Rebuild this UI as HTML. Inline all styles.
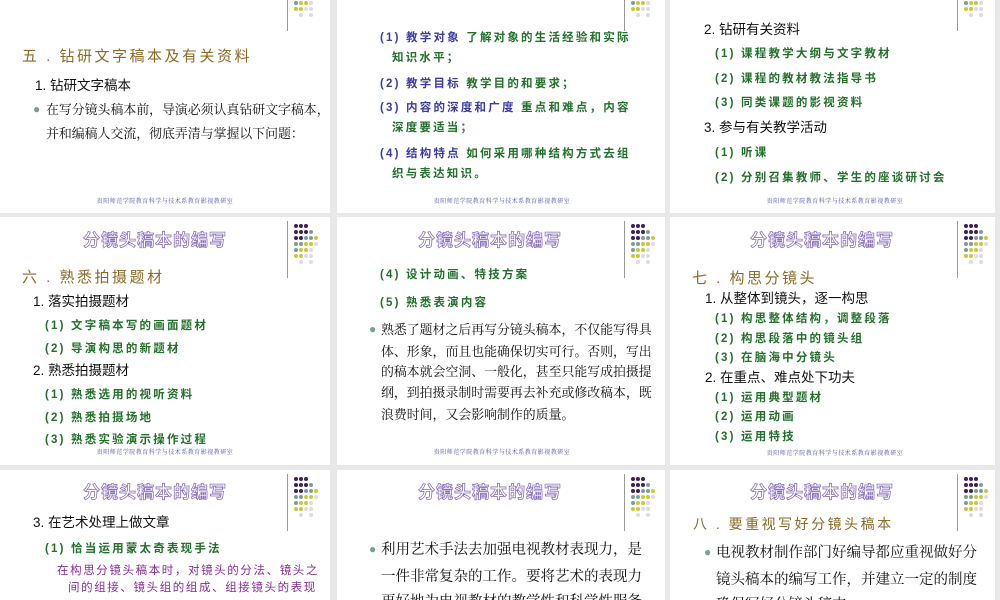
<!DOCTYPE html>
<html><head><meta charset="utf-8">
<style>
*{margin:0;padding:0;box-sizing:border-box}
html{width:1000px;height:600px;overflow:hidden}
body{width:1000px;height:600px;background:#e8e8e8;position:relative;overflow:hidden;font-family:"Liberation Serif","Noto Serif CJK SC",serif}
.s{position:absolute;background:#fff;overflow:hidden}
.t{position:absolute;white-space:nowrap;line-height:20px}
.blk{font-size:13.5px;color:#111;font-family:"Liberation Sans","Noto Sans CJK SC",sans-serif}
.bd{font-size:12.9px;color:#111}
.g{font-size:11.5px;color:#22702a;letter-spacing:2.2px;font-family:"Liberation Sans","Noto Sans CJK SC",sans-serif;font-weight:bold}
.bl{color:#3b3ba6}
.h{font-size:15px;color:#8c6a28;letter-spacing:2.5px;font-family:"Liberation Sans","Noto Sans CJK SC",sans-serif}
.ti{position:absolute;width:200px;text-align:center;font-size:17px;font-weight:bold;color:#fff;-webkit-text-stroke:0.8px #8a70bc;letter-spacing:1px;font-family:"Liberation Sans","Noto Sans CJK SC",sans-serif;line-height:22px}
.f{position:absolute;width:330px;text-align:center;font-size:6px;color:#5050b0;line-height:8px;letter-spacing:.5px}
.dots{position:absolute;left:285px;top:0;width:40px;height:64px}
.p{color:#8a2a9a;font-size:11.5px;letter-spacing:1.6px;font-family:"Liberation Sans","Noto Sans CJK SC",sans-serif}
</style></head><body>

<!-- Row 1 -->
<div class="s" style="left:0;top:-30px;width:330px;height:243px">
<svg class="dots" viewBox="0 0 40 64"><line x1="2.5" y1="4" x2="2.5" y2="61" stroke="#999" stroke-width="1"/>
<circle cx="11" cy="33" r="2" fill="#7a9e9a"/><circle cx="16" cy="33" r="2" fill="#c8c83a"/><circle cx="21" cy="33" r="2" fill="#c8c83a"/><circle cx="26" cy="33" r="2" fill="#dcdce6"/>
<circle cx="11" cy="39" r="2" fill="#c8c83a"/><circle cx="16" cy="39" r="2" fill="#c8c83a"/><circle cx="21" cy="39" r="2" fill="#dcdce6"/><circle cx="26" cy="39" r="2" fill="#dcdce6"/>
<circle cx="16" cy="45" r="2" fill="#dcdce6"/><circle cx="26" cy="45" r="2" fill="#dcdce6"/></svg>
<div class="t h" style="left:22px;top:77px">五 . 钻研文字稿本及有关资料</div>
<div class="t blk" style="left:35px;top:106px">1. 钻研文字稿本</div>
<div class="t" style="left:33px;top:129px;color:#7a9e9a;font-size:12px">●</div>
<div class="t bd" style="left:46px;top:130px">在写分镜头稿本前，导演必须认真钻研文字稿本，</div>
<div class="t bd" style="left:46px;top:154px">并和编稿人交流，彻底弄清与掌握以下问题：</div>
<div class="f" style="left:0;top:228px">贵阳师范学院教育科学与技术系教育影视教研室</div>
</div>

<div class="s" style="left:337px;top:-30px;width:328px;height:243px">
<svg class="dots" viewBox="0 0 40 64"><line x1="2.5" y1="4" x2="2.5" y2="61" stroke="#999"/>
<circle cx="11" cy="33" r="2" fill="#7a9e9a"/><circle cx="16" cy="33" r="2" fill="#c8c83a"/><circle cx="21" cy="33" r="2" fill="#c8c83a"/><circle cx="26" cy="33" r="2" fill="#dcdce6"/>
<circle cx="11" cy="39" r="2" fill="#c8c83a"/><circle cx="16" cy="39" r="2" fill="#c8c83a"/><circle cx="21" cy="39" r="2" fill="#dcdce6"/><circle cx="26" cy="39" r="2" fill="#dcdce6"/>
<circle cx="16" cy="45" r="2" fill="#dcdce6"/><circle cx="26" cy="45" r="2" fill="#dcdce6"/></svg>
<div class="t g" style="left:43px;top:58px"><span class="bl">(1) 教学对象</span> 了解对象的生活经验和实际</div>
<div class="t g" style="left:55px;top:78px">知识水平；</div>
<div class="t g" style="left:43px;top:104px"><span class="bl">(2) 教学目标</span> 教学目的和要求；</div>
<div class="t g" style="left:43px;top:128px"><span class="bl">(3) 内容的深度和广度</span> 重点和难点，内容</div>
<div class="t g" style="left:55px;top:148px">深度要适当；</div>
<div class="t g" style="left:43px;top:174px"><span class="bl">(4) 结构特点</span> 如何采用哪种结构方式去组</div>
<div class="t g" style="left:55px;top:194px">织与表达知识。</div>
<div class="f" style="left:0;top:228px">贵阳师范学院教育科学与技术系教育影视教研室</div>
</div>

<div class="s" style="left:670px;top:-30px;width:325px;height:243px">
<svg class="dots" viewBox="0 0 40 64"><line x1="2.5" y1="4" x2="2.5" y2="61" stroke="#999"/>
<circle cx="11" cy="33" r="2" fill="#7a9e9a"/><circle cx="16" cy="33" r="2" fill="#c8c83a"/><circle cx="21" cy="33" r="2" fill="#c8c83a"/><circle cx="26" cy="33" r="2" fill="#dcdce6"/>
<circle cx="11" cy="39" r="2" fill="#c8c83a"/><circle cx="16" cy="39" r="2" fill="#c8c83a"/><circle cx="21" cy="39" r="2" fill="#dcdce6"/><circle cx="26" cy="39" r="2" fill="#dcdce6"/>
<circle cx="16" cy="45" r="2" fill="#dcdce6"/><circle cx="26" cy="45" r="2" fill="#dcdce6"/></svg>
<div class="t blk" style="left:34px;top:50px">2. 钻研有关资料</div>
<div class="t g" style="left:45px;top:74px">(1) 课程教学大纲与文字教材</div>
<div class="t g" style="left:45px;top:99px">(2) 课程的教材教法指导书</div>
<div class="t g" style="left:45px;top:123px">(3) 同类课题的影视资料</div>
<div class="t blk" style="left:34px;top:148px">3. 参与有关教学活动</div>
<div class="t g" style="left:45px;top:173px">(1) 听课</div>
<div class="t g" style="left:45px;top:198px">(2) 分别召集教师、学生的座谈研讨会</div>
<div class="f" style="left:0;top:228px">贵阳师范学院教育科学与技术系教育影视教研室</div>
</div>

<!-- Row 2 -->
<div class="s" style="left:0;top:217px;width:330px;height:248px">
<svg class="dots" viewBox="0 0 40 64"><line x1="2.5" y1="4" x2="2.5" y2="61" stroke="#999"/>
<circle cx="11" cy="9" r="2" fill="#3d1f5c"/><circle cx="16" cy="9" r="2" fill="#3d1f5c"/><circle cx="21" cy="9" r="2" fill="#3d1f5c"/>
<circle cx="11" cy="15" r="2" fill="#3d1f5c"/><circle cx="16" cy="15" r="2" fill="#3d1f5c"/><circle cx="21" cy="15" r="2" fill="#3d1f5c"/><circle cx="26" cy="15" r="2" fill="#7a9e9a"/>
<circle cx="11" cy="21" r="2" fill="#3d1f5c"/><circle cx="16" cy="21" r="2" fill="#3d1f5c"/><circle cx="21" cy="21" r="2" fill="#7a9e9a"/><circle cx="26" cy="21" r="2" fill="#7a9e9a"/><circle cx="31" cy="21" r="2" fill="#c8c83a"/>
<circle cx="11" cy="27" r="2" fill="#7a9e9a"/><circle cx="16" cy="27" r="2" fill="#7a9e9a"/><circle cx="21" cy="27" r="2" fill="#c8c83a"/><circle cx="26" cy="27" r="2" fill="#c8c83a"/><circle cx="31" cy="27" r="2" fill="#dcdce6"/>
<circle cx="11" cy="33" r="2" fill="#7a9e9a"/><circle cx="16" cy="33" r="2" fill="#c8c83a"/><circle cx="21" cy="33" r="2" fill="#c8c83a"/><circle cx="26" cy="33" r="2" fill="#dcdce6"/>
<circle cx="11" cy="39" r="2" fill="#c8c83a"/><circle cx="16" cy="39" r="2" fill="#c8c83a"/><circle cx="21" cy="39" r="2" fill="#dcdce6"/><circle cx="26" cy="39" r="2" fill="#dcdce6"/>
<circle cx="16" cy="45" r="2" fill="#dcdce6"/><circle cx="26" cy="45" r="2" fill="#dcdce6"/></svg>
<div class="ti" style="left:55px;top:13px">分镜头稿本的编写</div>
<div class="t h" style="left:22px;top:51px">六 . 熟悉拍摄题材</div>
<div class="t blk" style="left:33px;top:75px">1. 落实拍摄题材</div>
<div class="t g" style="left:45px;top:99px">(1) 文字稿本写的画面题材</div>
<div class="t g" style="left:45px;top:122px">(2) 导演构思的新题材</div>
<div class="t blk" style="left:33px;top:144px">2. 熟悉拍摄题材</div>
<div class="t g" style="left:45px;top:168px">(1) 熟悉选用的视听资料</div>
<div class="t g" style="left:45px;top:191px">(2) 熟悉拍摄场地</div>
<div class="t g" style="left:45px;top:213px">(3) 熟悉实验演示操作过程</div>
<div class="f" style="left:0;top:232px">贵阳师范学院教育科学与技术系教育影视教研室</div>
</div>

<div class="s" style="left:337px;top:217px;width:328px;height:248px">
<svg class="dots" viewBox="0 0 40 64"><line x1="2.5" y1="4" x2="2.5" y2="61" stroke="#999"/>
<circle cx="11" cy="9" r="2" fill="#3d1f5c"/><circle cx="16" cy="9" r="2" fill="#3d1f5c"/><circle cx="21" cy="9" r="2" fill="#3d1f5c"/>
<circle cx="11" cy="15" r="2" fill="#3d1f5c"/><circle cx="16" cy="15" r="2" fill="#3d1f5c"/><circle cx="21" cy="15" r="2" fill="#3d1f5c"/><circle cx="26" cy="15" r="2" fill="#7a9e9a"/>
<circle cx="11" cy="21" r="2" fill="#3d1f5c"/><circle cx="16" cy="21" r="2" fill="#3d1f5c"/><circle cx="21" cy="21" r="2" fill="#7a9e9a"/><circle cx="26" cy="21" r="2" fill="#7a9e9a"/><circle cx="31" cy="21" r="2" fill="#c8c83a"/>
<circle cx="11" cy="27" r="2" fill="#7a9e9a"/><circle cx="16" cy="27" r="2" fill="#7a9e9a"/><circle cx="21" cy="27" r="2" fill="#c8c83a"/><circle cx="26" cy="27" r="2" fill="#c8c83a"/><circle cx="31" cy="27" r="2" fill="#dcdce6"/>
<circle cx="11" cy="33" r="2" fill="#7a9e9a"/><circle cx="16" cy="33" r="2" fill="#c8c83a"/><circle cx="21" cy="33" r="2" fill="#c8c83a"/><circle cx="26" cy="33" r="2" fill="#dcdce6"/>
<circle cx="11" cy="39" r="2" fill="#c8c83a"/><circle cx="16" cy="39" r="2" fill="#c8c83a"/><circle cx="21" cy="39" r="2" fill="#dcdce6"/><circle cx="26" cy="39" r="2" fill="#dcdce6"/>
<circle cx="16" cy="45" r="2" fill="#dcdce6"/><circle cx="26" cy="45" r="2" fill="#dcdce6"/></svg>
<div class="ti" style="left:53px;top:13px">分镜头稿本的编写</div>
<div class="t g" style="left:43px;top:48px">(4) 设计动画、特技方案</div>
<div class="t g" style="left:43px;top:76px">(5) 熟悉表演内容</div>
<div class="t" style="left:32px;top:102px;color:#7a9e9a;font-size:12px">●</div>
<div class="t bd" style="left:44px;top:103px">熟悉了题材之后再写分镜头稿本，不仅能写得具</div>
<div class="t bd" style="left:44px;top:125px">体、形象，而且也能确保切实可行。否则，写出</div>
<div class="t bd" style="left:44px;top:145px">的稿本就会空洞、一般化，甚至只能写成拍摄提</div>
<div class="t bd" style="left:44px;top:166px">纲，到拍摄录制时需要再去补充或修改稿本，既</div>
<div class="t bd" style="left:44px;top:188px">浪费时间，又会影响制作的质量。</div>
<div class="f" style="left:0;top:232px">贵阳师范学院教育科学与技术系教育影视教研室</div>
</div>

<div class="s" style="left:670px;top:217px;width:325px;height:248px">
<svg class="dots" viewBox="0 0 40 64"><line x1="2.5" y1="4" x2="2.5" y2="61" stroke="#999"/>
<circle cx="11" cy="9" r="2" fill="#3d1f5c"/><circle cx="16" cy="9" r="2" fill="#3d1f5c"/><circle cx="21" cy="9" r="2" fill="#3d1f5c"/>
<circle cx="11" cy="15" r="2" fill="#3d1f5c"/><circle cx="16" cy="15" r="2" fill="#3d1f5c"/><circle cx="21" cy="15" r="2" fill="#3d1f5c"/><circle cx="26" cy="15" r="2" fill="#7a9e9a"/>
<circle cx="11" cy="21" r="2" fill="#3d1f5c"/><circle cx="16" cy="21" r="2" fill="#3d1f5c"/><circle cx="21" cy="21" r="2" fill="#7a9e9a"/><circle cx="26" cy="21" r="2" fill="#7a9e9a"/><circle cx="31" cy="21" r="2" fill="#c8c83a"/>
<circle cx="11" cy="27" r="2" fill="#7a9e9a"/><circle cx="16" cy="27" r="2" fill="#7a9e9a"/><circle cx="21" cy="27" r="2" fill="#c8c83a"/><circle cx="26" cy="27" r="2" fill="#c8c83a"/><circle cx="31" cy="27" r="2" fill="#dcdce6"/>
<circle cx="11" cy="33" r="2" fill="#7a9e9a"/><circle cx="16" cy="33" r="2" fill="#c8c83a"/><circle cx="21" cy="33" r="2" fill="#c8c83a"/><circle cx="26" cy="33" r="2" fill="#dcdce6"/>
<circle cx="11" cy="39" r="2" fill="#c8c83a"/><circle cx="16" cy="39" r="2" fill="#c8c83a"/><circle cx="21" cy="39" r="2" fill="#dcdce6"/><circle cx="26" cy="39" r="2" fill="#dcdce6"/>
<circle cx="16" cy="45" r="2" fill="#dcdce6"/><circle cx="26" cy="45" r="2" fill="#dcdce6"/></svg>
<div class="ti" style="left:52px;top:13px">分镜头稿本的编写</div>
<div class="t h" style="left:22px;top:52px">七 . 构思分镜头</div>
<div class="t blk" style="left:35px;top:72px">1. 从整体到镜头，逐一构思</div>
<div class="t g" style="left:45px;top:92px">(1) 构思整体结构，调整段落</div>
<div class="t g" style="left:45px;top:112px">(2) 构思段落中的镜头组</div>
<div class="t g" style="left:45px;top:131px">(3) 在脑海中分镜头</div>
<div class="t blk" style="left:35px;top:151px">2. 在重点、难点处下功夫</div>
<div class="t g" style="left:45px;top:171px">(1) 运用典型题材</div>
<div class="t g" style="left:45px;top:190px">(2) 运用动画</div>
<div class="t g" style="left:45px;top:210px">(3) 运用特技</div>
<div class="f" style="left:0;top:233px">贵阳师范学院教育科学与技术系教育影视教研室</div>
</div>

<!-- Row 3 -->
<div class="s" style="left:0;top:470px;width:330px;height:130px">
<svg class="dots" viewBox="0 0 40 64"><line x1="2.5" y1="4" x2="2.5" y2="61" stroke="#999"/>
<circle cx="11" cy="9" r="2" fill="#3d1f5c"/><circle cx="16" cy="9" r="2" fill="#3d1f5c"/><circle cx="21" cy="9" r="2" fill="#3d1f5c"/>
<circle cx="11" cy="15" r="2" fill="#3d1f5c"/><circle cx="16" cy="15" r="2" fill="#3d1f5c"/><circle cx="21" cy="15" r="2" fill="#3d1f5c"/><circle cx="26" cy="15" r="2" fill="#7a9e9a"/>
<circle cx="11" cy="21" r="2" fill="#3d1f5c"/><circle cx="16" cy="21" r="2" fill="#3d1f5c"/><circle cx="21" cy="21" r="2" fill="#7a9e9a"/><circle cx="26" cy="21" r="2" fill="#7a9e9a"/><circle cx="31" cy="21" r="2" fill="#c8c83a"/>
<circle cx="11" cy="27" r="2" fill="#7a9e9a"/><circle cx="16" cy="27" r="2" fill="#7a9e9a"/><circle cx="21" cy="27" r="2" fill="#c8c83a"/><circle cx="26" cy="27" r="2" fill="#c8c83a"/><circle cx="31" cy="27" r="2" fill="#dcdce6"/>
<circle cx="11" cy="33" r="2" fill="#7a9e9a"/><circle cx="16" cy="33" r="2" fill="#c8c83a"/><circle cx="21" cy="33" r="2" fill="#c8c83a"/><circle cx="26" cy="33" r="2" fill="#dcdce6"/>
<circle cx="11" cy="39" r="2" fill="#c8c83a"/><circle cx="16" cy="39" r="2" fill="#c8c83a"/><circle cx="21" cy="39" r="2" fill="#dcdce6"/><circle cx="26" cy="39" r="2" fill="#dcdce6"/>
<circle cx="16" cy="45" r="2" fill="#dcdce6"/><circle cx="26" cy="45" r="2" fill="#dcdce6"/></svg>
<div class="ti" style="left:55px;top:12px">分镜头稿本的编写</div>
<div class="t blk" style="left:33px;top:43px">3. 在艺术处理上做文章</div>
<div class="t g" style="left:45px;top:69px">(1) 恰当运用蒙太奇表现手法</div>
<div class="t p" style="left:57px;top:91px">在构思分镜头稿本时，对镜头的分法、镜头之</div>
<div class="t p" style="left:68px;top:108px">间的组接、镜头组的组成、组接镜头的表现</div>
</div>

<div class="s" style="left:337px;top:470px;width:328px;height:130px">
<svg class="dots" viewBox="0 0 40 64"><line x1="2.5" y1="4" x2="2.5" y2="61" stroke="#999"/>
<circle cx="11" cy="9" r="2" fill="#3d1f5c"/><circle cx="16" cy="9" r="2" fill="#3d1f5c"/><circle cx="21" cy="9" r="2" fill="#3d1f5c"/>
<circle cx="11" cy="15" r="2" fill="#3d1f5c"/><circle cx="16" cy="15" r="2" fill="#3d1f5c"/><circle cx="21" cy="15" r="2" fill="#3d1f5c"/><circle cx="26" cy="15" r="2" fill="#7a9e9a"/>
<circle cx="11" cy="21" r="2" fill="#3d1f5c"/><circle cx="16" cy="21" r="2" fill="#3d1f5c"/><circle cx="21" cy="21" r="2" fill="#7a9e9a"/><circle cx="26" cy="21" r="2" fill="#7a9e9a"/><circle cx="31" cy="21" r="2" fill="#c8c83a"/>
<circle cx="11" cy="27" r="2" fill="#7a9e9a"/><circle cx="16" cy="27" r="2" fill="#7a9e9a"/><circle cx="21" cy="27" r="2" fill="#c8c83a"/><circle cx="26" cy="27" r="2" fill="#c8c83a"/><circle cx="31" cy="27" r="2" fill="#dcdce6"/>
<circle cx="11" cy="33" r="2" fill="#7a9e9a"/><circle cx="16" cy="33" r="2" fill="#c8c83a"/><circle cx="21" cy="33" r="2" fill="#c8c83a"/><circle cx="26" cy="33" r="2" fill="#dcdce6"/>
<circle cx="11" cy="39" r="2" fill="#c8c83a"/><circle cx="16" cy="39" r="2" fill="#c8c83a"/><circle cx="21" cy="39" r="2" fill="#dcdce6"/><circle cx="26" cy="39" r="2" fill="#dcdce6"/>
<circle cx="16" cy="45" r="2" fill="#dcdce6"/><circle cx="26" cy="45" r="2" fill="#dcdce6"/></svg>
<div class="ti" style="left:53px;top:12px">分镜头稿本的编写</div>
<div class="t" style="left:32px;top:69px;color:#7a9e9a;font-size:12px">●</div>
<div class="t" style="left:44px;top:70px;font-size:14.5px;color:#111">利用艺术手法去加强电视教材表现力，是</div>
<div class="t" style="left:44px;top:97px;font-size:14.5px;color:#111">一件非常复杂的工作。要将艺术的表现力</div>
<div class="t" style="left:44px;top:122px;font-size:14.5px;color:#111">更好地为电视教材的教学性和科学性服务</div>
</div>

<div class="s" style="left:670px;top:470px;width:325px;height:130px">
<svg class="dots" viewBox="0 0 40 64"><line x1="2.5" y1="4" x2="2.5" y2="61" stroke="#999"/>
<circle cx="11" cy="9" r="2" fill="#3d1f5c"/><circle cx="16" cy="9" r="2" fill="#3d1f5c"/><circle cx="21" cy="9" r="2" fill="#3d1f5c"/>
<circle cx="11" cy="15" r="2" fill="#3d1f5c"/><circle cx="16" cy="15" r="2" fill="#3d1f5c"/><circle cx="21" cy="15" r="2" fill="#3d1f5c"/><circle cx="26" cy="15" r="2" fill="#7a9e9a"/>
<circle cx="11" cy="21" r="2" fill="#3d1f5c"/><circle cx="16" cy="21" r="2" fill="#3d1f5c"/><circle cx="21" cy="21" r="2" fill="#7a9e9a"/><circle cx="26" cy="21" r="2" fill="#7a9e9a"/><circle cx="31" cy="21" r="2" fill="#c8c83a"/>
<circle cx="11" cy="27" r="2" fill="#7a9e9a"/><circle cx="16" cy="27" r="2" fill="#7a9e9a"/><circle cx="21" cy="27" r="2" fill="#c8c83a"/><circle cx="26" cy="27" r="2" fill="#c8c83a"/><circle cx="31" cy="27" r="2" fill="#dcdce6"/>
<circle cx="11" cy="33" r="2" fill="#7a9e9a"/><circle cx="16" cy="33" r="2" fill="#c8c83a"/><circle cx="21" cy="33" r="2" fill="#c8c83a"/><circle cx="26" cy="33" r="2" fill="#dcdce6"/>
<circle cx="11" cy="39" r="2" fill="#c8c83a"/><circle cx="16" cy="39" r="2" fill="#c8c83a"/><circle cx="21" cy="39" r="2" fill="#dcdce6"/><circle cx="26" cy="39" r="2" fill="#dcdce6"/>
<circle cx="16" cy="45" r="2" fill="#dcdce6"/><circle cx="26" cy="45" r="2" fill="#dcdce6"/></svg>
<div class="ti" style="left:52px;top:12px">分镜头稿本的编写</div>
<div class="t h" style="left:23px;top:44px;font-size:14px;letter-spacing:2.5px">八 . 要重视写好分镜头稿本</div>
<div class="t" style="left:34px;top:72px;color:#7a9e9a;font-size:12px">●</div>
<div class="t" style="left:46px;top:73px;font-size:14.5px;color:#111">电视教材制作部门好编导都应重视做好分</div>
<div class="t" style="left:46px;top:100px;font-size:14.5px;color:#111">镜头稿本的编写工作，并建立一定的制度</div>
<div class="t" style="left:46px;top:125px;font-size:14.5px;color:#111">确保写好分镜头稿本</div>
</div>

</body></html>
